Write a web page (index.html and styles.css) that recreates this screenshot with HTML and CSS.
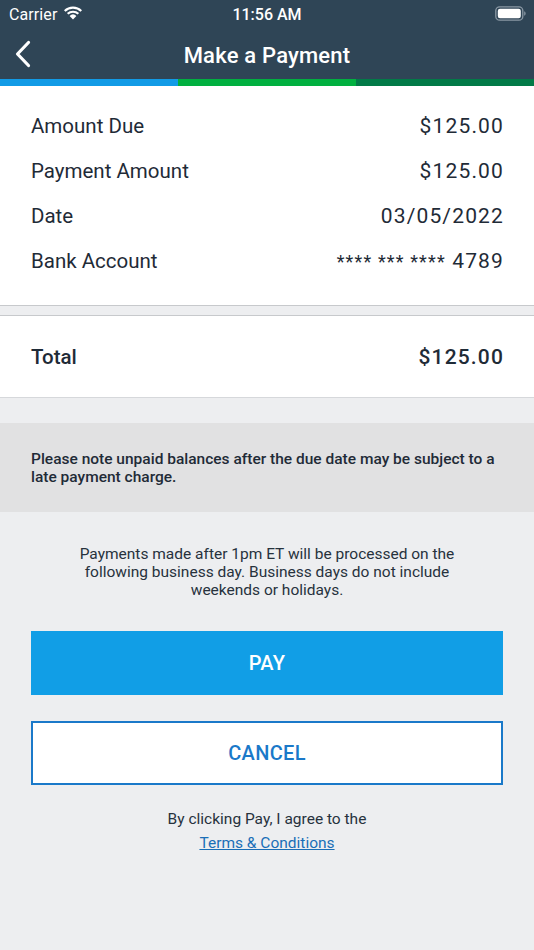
FILE: index.html
```html
<!DOCTYPE html>
<html lang="en">
<head>
<meta charset="utf-8">
<title>Make a Payment</title>
<link rel="stylesheet" href="styles.css">
</head>
<body>
<div class="screen">
  <header class="topbar">
    <div class="status">
      <div class="status-left">
        <span class="carrier">Carrier</span>
        <svg class="wifi" width="20" height="14" viewBox="0 0 20 14">
          <path d="M10 13.5 L6.6 9.9 A5 5 0 0 1 13.4 9.9 Z" fill="#fff"/>
          <path d="M3.9 7.1 A8.8 8.8 0 0 1 16.1 7.1 L14.6 8.6 A6.7 6.7 0 0 0 5.4 8.6 Z" fill="#fff"/>
          <path d="M1 4.2 A12.8 12.8 0 0 1 19 4.2 L17.5 5.7 A10.7 10.7 0 0 0 2.5 5.7 Z" fill="#fff"/>
        </svg>
      </div>
      <span class="time">11:56 AM</span>
      <div class="status-right">
        <svg class="battery" width="31" height="15" viewBox="0 0 31 15">
          <rect x="0.8" y="0.8" width="27" height="13.4" rx="3.8" fill="none" stroke="#8a98a4" stroke-width="1.3"/>
          <rect x="2.8" y="2.8" width="23" height="9.4" rx="2.2" fill="#fff"/>
          <path d="M29.2 5.2 Q30.6 5.6 30.6 7.5 Q30.6 9.4 29.2 9.8 Z" fill="#8a98a4"/>
        </svg>
      </div>
    </div>
    <div class="navbar">
      <svg class="back" width="18" height="28" viewBox="0 0 18 28">
        <path d="M14.5 2.5 L3.5 14 L14.5 25.5" fill="none" stroke="#fff" stroke-width="3.2" stroke-linecap="round" stroke-linejoin="round"/>
      </svg>
      <h1 class="title">Make a Payment</h1>
    </div>
    <div class="stripe">
      <span class="s1"></span><span class="s2"></span><span class="s3"></span>
    </div>
  </header>

  <section class="details">
    <div class="row"><span>Amount Due</span><span class="val">$125.00</span></div>
    <div class="row"><span>Payment Amount</span><span class="val">$125.00</span></div>
    <div class="row"><span>Date</span><span class="val">03/05/2022</span></div>
    <div class="row"><span>Bank Account</span><span class="val"><span class="mask">**** *** ****</span> 4789</span></div>
  </section>

  <div class="gap small"></div>

  <section class="total">
    <div class="row bold"><span>Total</span><span class="val">$125.00</span></div>
  </section>

  <div class="gap medium"></div>

  <section class="notice">
    Please note unpaid balances after the due date may be subject to a late payment charge.
  </section>

  <section class="actions">
    <p class="info">Payments made after 1pm ET will be processed on the following business day. Business days do not include weekends or holidays.</p>
    <button class="btn pay">PAY</button>
    <button class="btn cancel">CANCEL</button>
    <p class="agree">By clicking Pay, I agree to the</p>
    <a class="terms" href="#">Terms &amp; Conditions</a>
  </section>
</div>
</body>
</html>
```

FILE: styles.css
```css
* { box-sizing: border-box; }
html, body { margin: 0; padding: 0; }
body {
  width: 534px;
  height: 950px;
  background: #edeef0;
  font-family: Roboto, "Noto Sans", "Liberation Sans", sans-serif;
  color: #1f2b37;
  overflow: hidden;
}
.screen { display: flex; flex-direction: column; min-height: 950px; }

.topbar { background: #2f4556; color: #fff; }
.status {
  height: 29px;
  display: flex;
  align-items: center;
  justify-content: space-between;
  padding: 0 8px 0 9px;
  position: relative;
}
.status-left { display: flex; align-items: center; gap: 6px; }
.carrier { font-size: 16px; letter-spacing: 0.1px; }
.wifi { margin-top: -3px; }
.time {
  position: absolute;
  left: 0; right: 0;
  text-align: center;
  font-size: 16px;
  font-weight: 500;
  pointer-events: none;
}
.status-right { display: flex; align-items: center; margin-top: -3px; }

.navbar {
  height: 50px;
  display: flex;
  align-items: center;
  justify-content: center;
  position: relative;
}
.back { position: absolute; left: 14px; top: 11px; }
.title {
  margin: 2px 0 0;
  font-size: 22px;
  font-weight: 500;
  letter-spacing: 0.2px;
}
.stripe { display: flex; height: 7px; }
.stripe span { flex: 1; }
.s1 { background: #129be6; }
.s2 { background: #01b040; }
.s3 { background: #027a47; }

.details {
  background: #fff;
  padding: 17px 31px 22px;
  border-bottom: 1px solid #c7c9cc;
}
.row {
  display: flex;
  justify-content: space-between;
  align-items: center;
  height: 45px;
  font-size: 20.5px;
}
.val { font-size: 21px; letter-spacing: 1.15px; margin-right: -1px; }
.mask { font-size: 18px; }

.gap.small { height: 9px; }
.gap.medium { height: 25px; }

.total {
  background: #fff;
  padding: 18px 31px 18px;
  border-top: 1px solid #c7c9cc;
  border-bottom: 1px solid #d6d8db;
}
.row.bold { font-weight: 500; }

.notice {
  background: #e1e1e2;
  padding: 27px 31px 26px;
  font-size: 15.5px;
  font-weight: 500;
  line-height: 18px;
  color: #1f2b37;
}

.actions {
  display: flex;
  flex-direction: column;
  align-items: center;
  padding: 33px 31px 0;
}
.info {
  margin: 0;
  width: 410px;
  text-align: center;
  font-size: 15.5px;
  line-height: 18px;
  color: #27323d;
}
.btn {
  width: 472px;
  height: 64px;
  font-family: inherit;
  font-size: 20px;
  font-weight: 500;
  letter-spacing: 0.3px;
  border: none;
  cursor: pointer;
}
.pay {
  margin-top: 32px;
  background: #119ee6;
  color: #fff;
}
.cancel {
  margin-top: 26px;
  background: #fff;
  color: #1a79c9;
  border: 2px solid #1a79c9;
}
.agree {
  margin: 25px 0 0;
  font-size: 15.5px;
  line-height: 18px;
  color: #27323d;
}
.terms {
  margin-top: 6px;
  font-size: 15.5px;
  line-height: 18px;
  color: #1a6eb7;
  text-decoration: underline;
}
```
